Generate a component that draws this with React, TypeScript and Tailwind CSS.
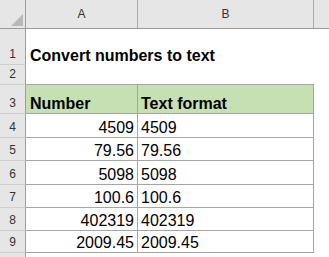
import React from 'react';

type Row = { n: string; h: string; a?: string; b?: string; kind: 'title' | 'blank' | 'head' | 'data' | 'empty' };

const rows: Row[] = [
  { n: '1', h: 'h-[36px]', a: 'Convert numbers to text', kind: 'title' },
  { n: '2', h: 'h-[20px]', kind: 'blank' },
  { n: '3', h: 'h-[29px]', a: 'Number', b: 'Text format', kind: 'head' },
  { n: '4', h: 'h-[24px]', a: '4509', b: '4509', kind: 'data' },
  { n: '5', h: 'h-[23px]', a: '79.56', b: '79.56', kind: 'data' },
  { n: '6', h: 'h-[24px]', a: '5098', b: '5098', kind: 'data' },
  { n: '7', h: 'h-[23px]', a: '100.6', b: '100.6', kind: 'data' },
  { n: '8', h: 'h-[23px]', a: '402319', b: '402319', kind: 'data' },
  { n: '9', h: 'h-[22px]', a: '2009.45', b: '2009.45', kind: 'data' },
  { n: '', h: 'h-[20px]', kind: 'empty' },
];

const App: React.FC = () => {
  return (
    <div className="w-[329px] h-[257px] overflow-hidden bg-white text-black font-['Liberation_Sans',Arial,sans-serif]">
      {/* column headers */}
      <div className="flex h-[29px] bg-[#e6e6e6] border-b border-[#9b9b9b]">
        <div className="w-[26px] shrink-0 flex items-end justify-end pr-[2px] pb-[2px] border-r border-[#9e9e9e]">
          <svg width="12" height="12" viewBox="0 0 12 12">
            <polygon points="0,12 12,12 12,0" fill="#b8b8b8" />
          </svg>
        </div>
        <div className="w-[112px] shrink-0 flex items-end justify-center pb-[5px] text-[12px] text-[#333] border-r border-[#ababab]">A</div>
        <div className="w-[176px] shrink-0 flex items-end justify-center pb-[5px] text-[12px] text-[#333] border-r border-[#ababab]">B</div>
        <div className="flex-1" />
      </div>

      {rows.map((r, i) => {
        const table = r.kind === 'head' || r.kind === 'data';
        const topOfTable = r.kind === 'blank';
        const cellBase = 'shrink-0 flex items-end whitespace-nowrap leading-[18px] text-[16px]';
        const border = table
          ? 'border-r border-b border-[#a6a6a6]'
          : topOfTable
          ? 'border-b border-[#a6a6a6]'
          : '';
        const bg = r.kind === 'head' ? 'bg-[#c6e0b4]' : '';
        return (
          <div key={i} className={`flex ${r.h}`}>
            <div className="w-[26px] shrink-0 flex items-end justify-center pb-[3px] text-[12px] leading-[14px] text-[#333] bg-[#e6e6e6] border-r border-b border-r-[#9e9e9e] border-b-[#cfcfcf]">
              {r.n}
            </div>
            <div
              className={`${cellBase} w-[112px] ${border} ${bg} ${
                r.kind === 'data' ? 'justify-end pr-[3px]' : 'pl-[4px]'
              } ${r.kind === 'title' || r.kind === 'head' ? 'font-bold' : ''}`}
            >
              {r.a}
            </div>
            <div
              className={`${cellBase} w-[176px] pl-[3px] ${border} ${bg} ${r.kind === 'head' ? 'font-bold' : ''}`}
            >
              {r.b}
            </div>
            <div className="flex-1" />
          </div>
        );
      })}
    </div>
  );
};

export default App;
